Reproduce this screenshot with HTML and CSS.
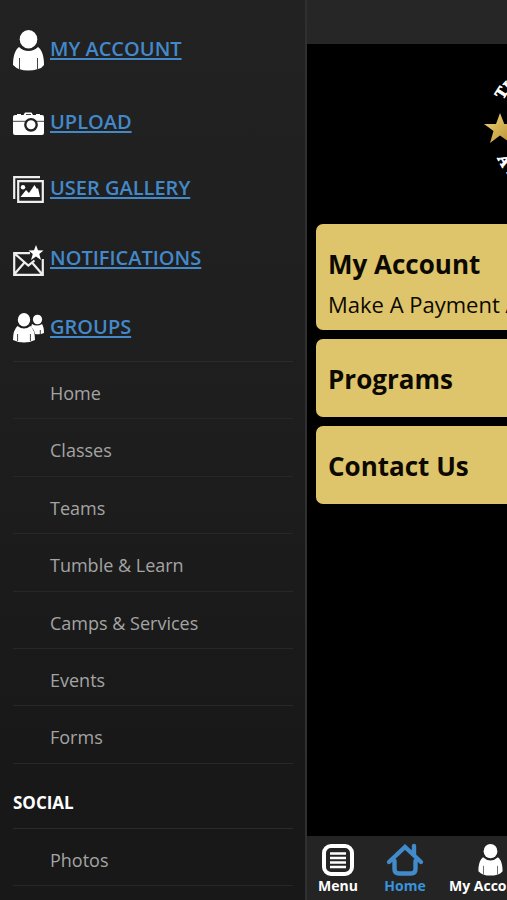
FILE: index.html
```html
<!DOCTYPE html>
<html lang="en">
<head>
<meta charset="utf-8">
<meta name="viewport" content="width=device-width, initial-scale=1">
<title>Menu</title>
<link rel="stylesheet" href="styles.css">
</head>
<body>
<div class="app">
  <aside class="drawer">
    <nav class="shortcuts">
      <a class="shortcut account" href="#">
        <svg width="31" height="41" viewBox="0 0 31 41"><ellipse cx="15.5" cy="9.2" rx="8.8" ry="9.2"/><path d="M6 17C2 20 0 26 0 35Q3 38 6 39Q15 42 25 39Q29 38 31 35C31 26 29 20 25 17Q21 21 15.5 21Q10 21 6 17Z"/><path class="cut" d="M6.5 28V39M24.500 28V39"/></svg>
        <span>MY ACCOUNT</span></a>
      <a class="shortcut upload" href="#">
        <svg width="31" height="23" viewBox="0 0 31 23"><path d="M2 3H4V2H8V3H10.500L12 .5H18.500L20 3H23V2H27V3H29Q31 3 31 5V21Q31 23 29 23H2Q0 23 0 21V5Q0 3 2 3Z"/><path class="cut" d="M0 9.300H31M13 2.500H18"/><circle class="lens" cx="18" cy="12.800" r="5.700"/></svg>
        <span>UPLOAD</span></a>
      <a class="shortcut gallery" href="#">
        <svg width="31" height="27" viewBox="0 0 31 27"><path class="line" d="M1.200 23V1.200H27M5.200 5.200H29.800V25.800H5.200Z"/><circle cx="10" cy="11.200" r="2.200"/><path d="M7.500 21L13 14L16 17L21.500 9L24 13L25 12L27 21Z"/></svg>
        <span>USER GALLERY</span></a>
      <a class="shortcut notifications" href="#">
        <svg width="31" height="31" viewBox="0 0 31 31"><path class="line" d="M17 8.200H1.200V29.800H29.800V14M1.500 8.500L15.300 20.500L21.500 15.500M1.500 29L11.500 17.500M29 29L19 17.500"/><path d="M23 0L25 5.300L30.500 5.500L26.300 9L28 15L23 11.500L18 15L19.800 9L15.500 5.500L21 5.300Z"/></svg>
        <span>NOTIFICATIONS</span></a>
      <a class="shortcut groups" href="#">
        <svg width="31" height="30" viewBox="0 0 31 30"><ellipse cx="24.500" cy="6.500" rx="4.600" ry="4.800"/><path d="M19 11Q24 14 29 11Q31 14 31 20Q27 22 22 21Q21 16 18 14Z"/><ellipse cx="11" cy="6.800" rx="6.200" ry="6.800"/><path d="M4.500 13Q11 18 17.500 13Q22 17 22 27Q11 32 0 27Q0 17 4.500 13Z"/><path class="cut" d="M4.600 21V28M17.400 21V28M27.300 17V21"/></svg>
        <span>GROUPS</span></a>
    </nav>
    <ul class="menu">
      <li>Home</li><li>Classes</li><li>Teams</li><li>Tumble &amp; Learn</li><li>Camps &amp; Services</li><li>Events</li><li>Forms</li>
    </ul>
    <h2 class="heading">SOCIAL</h2>
    <ul class="menu"><li>Photos</li></ul>
  </aside>
  <main class="page">
    <header class="topbar"></header>
    <section class="hero">
      <svg class="logo" width="28" height="100" viewBox="0 0 28 100">
        <defs><linearGradient id="gold" x2="1" y2="1"><stop stop-color="#f2d77b"/><stop offset=".45" stop-color="#d6b455"/><stop offset="1" stop-color="#b28b2d"/></linearGradient></defs>
        <path fill="url(#gold)" d="M21 34L25.300 45H37L28 52L31.500 64L21 56.500L11 64L14.500 52L5 45H17Z"/>
        <g class="ring"><text transform="translate(24 21) rotate(-58)">T</text><text transform="translate(31 13) rotate(-46)">U</text><text transform="translate(18 79) rotate(62)">A</text><text transform="translate(26 92) rotate(50)">T</text></g>
      </svg>
    </section>
    <section class="cards">
      <article class="card tall"><h3>My Account</h3><p>Make A Payment And More</p></article>
      <article class="card"><h3>Programs</h3></article>
      <article class="card"><h3>Contact Us</h3></article>
    </section>
    <footer class="tabs">
      <div class="tab first"><svg width="32" height="32" viewBox="0 0 32 32"><rect class="stroke" x="2" y="2" width="28" height="28" rx="7"/><path class="bars" d="M8 9.500H24M8 14H24M8 18.500H24M8 23H24"/></svg><span>Menu</span></div>
      <div class="tab active"><svg width="36" height="32" viewBox="0 0 36 32"><path class="stroke" d="M2 18L18 3L34 18M27 2V11M7.500 17V25Q7.500 29.500 12 29.500H24Q28.500 29.500 28.500 25V17"/></svg><span>Home</span></div>
      <div class="tab"><svg width="25" height="32" viewBox="0 0 31 41"><ellipse cx="15.500" cy="9.200" rx="8.800" ry="9.200"/><path d="M6 17C2 20 0 26 0 35Q3 38 6 39Q15 42 25 39Q29 38 31 35C31 26 29 20 25 17Q21 21 15.500 21Q10 21 6 17Z"/><path class="cut" d="M6.500 28V39M24.500 28V39"/></svg><span>My Account</span></div>
    </footer>
  </main>
</div>
</body>
</html>
```

FILE: styles.css
```css
* { box-sizing: border-box; margin: 0; padding: 0; }
body { background: #000; font-family: "Open Sans", sans-serif; overflow: hidden; }
.app { display: flex; width: 507px; height: 900px; overflow: hidden; }
svg { fill: #fff; flex: none; overflow: visible; }
.cut { fill: none; stroke: #444; stroke-width: 1; }
.lens { stroke: #222; stroke-width: 2.4; }
.line { fill: none; stroke: #eee; stroke-width: 2.2; }

.drawer { width: 307px; flex: none; padding: 24px 12px 0 13px; border-right: 2px solid #303030; background: linear-gradient(#222 0, #1e1e1e 45%, #181818 85%); overflow: hidden; }
.shortcuts { height: 337px; }
.shortcut { display: flex; align-items: center; gap: 6px; height: 50px; color: #4389ca; font-size: 20px; font-weight: 600; line-height: 28px; text-decoration: none; }
.shortcut span { text-decoration: underline; text-decoration-thickness: 2px; text-underline-offset: 2px; white-space: nowrap; }
.shortcut svg { margin-top: 2px; }
.upload { margin-top: 23px; }
.gallery { margin-top: 16px; }
.notifications { margin-top: 20px; }
.groups { margin-top: 19px; }
.notifications svg { margin-top: 5px; }
.menu { list-style: none; border-top: 1px solid #2b2b2b; }
.menu li { height: 57.4px; padding-left: 37px; border-bottom: 1px solid #272727; color: #a4a4a4; font-size: 18px; line-height: 62px; }
.heading { height: 64px; padding-top: 26px; color: #fff; font-size: 17px; font-weight: 700; line-height: 26px; }

.page { display: flex; flex-direction: column; width: 200px; background: #000; }
.topbar { height: 44px; background: #262626; flex: none; }
.hero { height: 180px; display: flex; justify-content: flex-end; padding-top: 35px; overflow: hidden; }
.ring { font: 700 16px "Liberation Serif", serif; stroke: #fff; stroke-width: .7; }
.cards { display: flex; flex-direction: column; gap: 9px; width: 400px; padding-left: 9px; }
.card { height: 78px; padding: 20px 12px; border-radius: 7px; background: #dec46b; color: #0c0900; white-space: nowrap; }
.tall { height: 106px; }
.card h3 { font-size: 26px; font-weight: 700; line-height: 40px; }
.card p { font-size: 22px; line-height: 40px; }
.tabs { display: flex; width: 300px; height: 64px; margin-top: auto; background: #242424; color: #fff; flex: none; }
.tab { display: flex; flex-direction: column; align-items: center; width: 76px; padding-top: 8px; font-size: 14px; font-weight: 700; line-height: 20px; }
.tab.first { width: 62px; }
.tab:last-child { width: 98px; }
.tab.active { width: 72px; color: #3794dc; }
.stroke { fill: none; stroke: #fff; stroke-width: 4; stroke-linecap: round; }
.active .stroke { stroke: #428bca; stroke-width: 4.4; }
.bars { stroke: #fff; stroke-width: 2.6; }
```
